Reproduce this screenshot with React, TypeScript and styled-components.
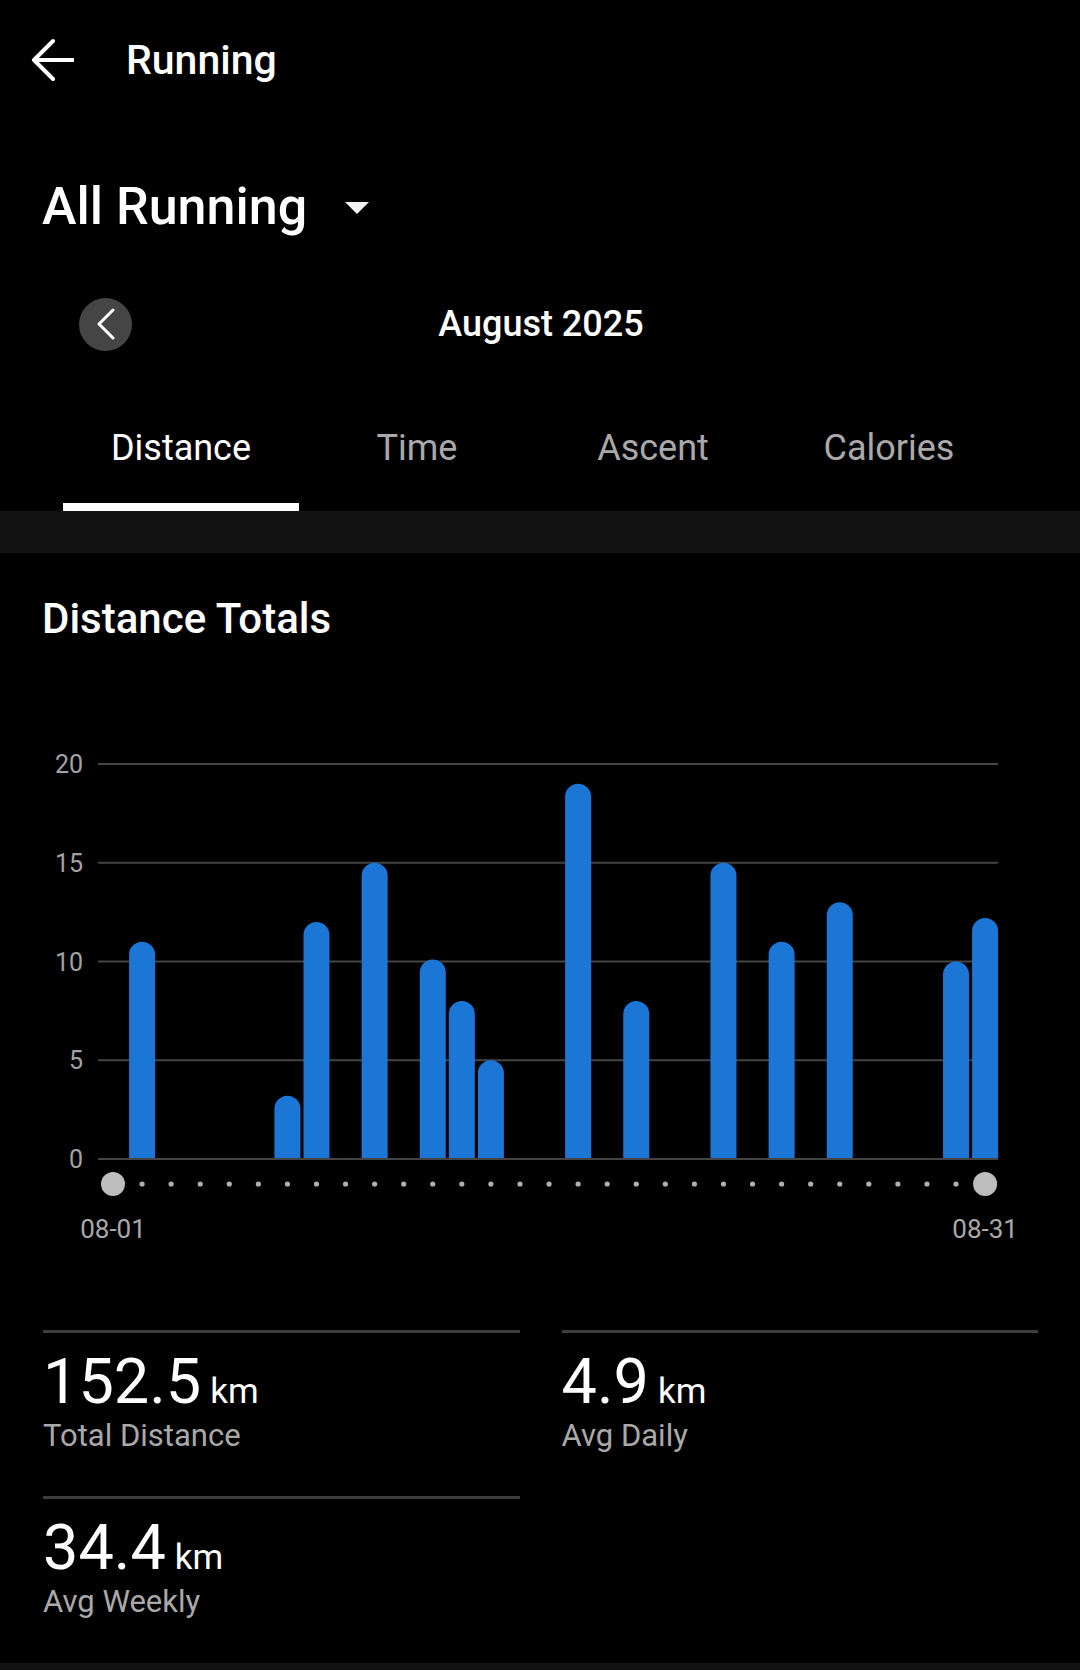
import React, { useState } from 'react';
import styled, { createGlobalStyle } from 'styled-components';

type Run = { day: number; km: number };

const RUNS: Run[] = [
  { day: 2, km: 11.0 },
  { day: 7, km: 3.2 },
  { day: 8, km: 12.0 },
  { day: 10, km: 15.0 },
  { day: 12, km: 10.1 },
  { day: 13, km: 8.0 },
  { day: 14, km: 5.0 },
  { day: 17, km: 19.0 },
  { day: 19, km: 8.0 },
  { day: 22, km: 15.0 },
  { day: 24, km: 11.0 },
  { day: 26, km: 13.0 },
  { day: 30, km: 10.0 },
  { day: 31, km: 12.2 },
];

const TABS = ['Distance', 'Time', 'Ascent', 'Calories'];

const STATS = [
  { value: '152.5', unit: 'km', label: 'Total Distance' },
  { value: '4.9', unit: 'km', label: 'Avg Daily' },
  { value: '34.4', unit: 'km', label: 'Avg Weekly' },
];

// chart geometry, in svg units (svg spans the page width)
const CHART_TOP = 698;
const ZERO_Y = 1158 - CHART_TOP;
const UNIT = 19.75;
const DAY0_X = 113;
const DAY_STEP = 29.07;
const BAR_W = 26;

const dayX = (day: number) => DAY0_X + (day - 1) * DAY_STEP;

const GlobalStyle = createGlobalStyle`
  html, body {
    margin: 0;
    padding: 0;
    background: #000;
  }
  body {
    font-family: Roboto, 'Noto Sans', 'Liberation Sans', sans-serif;
    color: #fff;
    -webkit-font-smoothing: antialiased;
  }
`;

const Screen = styled.div`
  width: 1080px;
  min-height: 1670px;
  background: #000;
  display: flex;
  flex-direction: column;
`;

const Header = styled.header`
  height: 120px;
  display: flex;
  align-items: center;
  padding-left: 30px;
`;

const IconButton = styled.button`
  display: flex;
  align-items: center;
  justify-content: center;
  padding: 0;
  border: none;
  background: none;
  cursor: pointer;
`;

const HeaderTitle = styled.h1`
  margin: 0 0 0 52px;
  font-size: 41px;
  font-weight: 500;
  line-height: 48px;
  color: #fff;
`;

const TypeRow = styled.div`
  margin-top: 46px;
  height: 81px;
  display: flex;
  align-items: center;
  padding-left: 42px;
`;

const TypeTitle = styled.h2`
  margin: 0;
  font-size: 52px;
  font-weight: 500;
  line-height: 64px;
  color: #fff;
`;

const Caret = styled.svg`
  margin-left: 38px;
  margin-top: 3px;
`;

const MonthRow = styled.div`
  margin-top: 47px;
  height: 60px;
  display: grid;
  grid-template-columns: 1fr auto 1fr;
  align-items: center;
`;

const PrevButton = styled.button`
  margin-left: 79px;
  width: 53px;
  height: 53px;
  border-radius: 50%;
  border: none;
  padding: 0;
  background: #454545;
  display: flex;
  align-items: center;
  justify-content: center;
  cursor: pointer;
`;

const MonthLabel = styled.div`
  font-size: 36px;
  font-weight: 500;
  line-height: 42px;
  color: #fff;
  padding-left: 2px;
`;

const TabList = styled.nav`
  margin-top: 30px;
  display: grid;
  grid-template-columns: repeat(4, 236px);
  padding-left: 63px;
`;

const Tab = styled.button<{ $active: boolean }>`
  height: 127px;
  box-sizing: border-box;
  padding: 8px 0 0;
  border: none;
  border-bottom: 8px solid ${({ $active }) => ($active ? '#fff' : 'transparent')};
  background: none;
  font-family: inherit;
  font-size: 36px;
  font-weight: 400;
  color: ${({ $active }) => ($active ? '#fff' : '#a9a9a9')};
  cursor: pointer;
`;

const Band = styled.div<{ $height: number }>`
  height: ${({ $height }) => $height}px;
  background: #121212;
`;

const SectionTitle = styled.h3`
  margin: 42px 0 0 42px;
  font-size: 42px;
  font-weight: 500;
  line-height: 48px;
  color: #fff;
`;

const ChartSvg = styled.svg`
  display: block;
  margin-top: 56px;
  font-family: Roboto, 'Noto Sans', sans-serif;
`;

const StatsGrid = styled.div`
  margin-top: 71px;
  display: grid;
  grid-template-columns: 1fr 1fr;
  column-gap: 42px;
  row-gap: 42px;
  padding: 0 42px 0 43px;
`;

const StatCell = styled.div`
  border-top: 3px solid #3c3c3c;
  padding-top: 17px;
`;

const StatValue = styled.div`
  display: flex;
  align-items: baseline;
  height: 63px;
  font-size: 63px;
  font-weight: 400;
  line-height: 63px;
  color: #fff;
  white-space: nowrap;
`;

const StatUnit = styled.span`
  font-size: 35px;
  line-height: 35px;
  margin-left: 9px;
`;

const StatLabel = styled.div`
  margin-top: 5px;
  font-size: 31px;
  line-height: 36px;
  color: #a9a9a9;
`;

const BackArrow = () => (
  <svg width="44" height="44" viewBox="0 0 44 44">
    <path
      d="M43 22H5M23 3L4 22l19 19"
      fill="none"
      stroke="#fff"
      strokeWidth="4"
      strokeLinecap="round"
      strokeLinejoin="round"
    />
  </svg>
);

const Chevron = () => (
  <svg width="20" height="32" viewBox="0 0 20 32">
    <path
      d="M17 2L3 16l14 14"
      fill="none"
      stroke="#fff"
      strokeWidth="3"
      strokeLinecap="round"
      strokeLinejoin="round"
    />
  </svg>
);

const barPath = (x: number, top: number, bottom: number) => {
  const r = BAR_W / 2;
  const left = x - r;
  const right = x + r;
  if (bottom - top < r) {
    return `M${left} ${bottom}V${top}H${right}V${bottom}Z`;
  }
  return `M${left} ${bottom}V${top + r}A${r} ${r} 0 0 1 ${right} ${top + r}V${bottom}Z`;
};

const DistanceChart = () => {
  const ticks = [0, 5, 10, 15, 20];
  const days = Array.from({ length: 31 }, (_, i) => i + 1);
  const dotY = 1183 - CHART_TOP;

  return (
    <ChartSvg width="1080" height="560" viewBox="0 0 1080 560">
      {ticks.map((t) => {
        const y = ZERO_Y - t * UNIT;
        return (
          <g key={t}>
            <line x1="98" x2="998" y1={y} y2={y} stroke="#444" strokeWidth="2" />
            <text
              x="83"
              y={y + 9}
              textAnchor="end"
              fontSize="25"
              fill="#a3a3a3"
            >
              {t}
            </text>
          </g>
        );
      })}
      {RUNS.map(({ day, km }) => (
        <path
          key={day}
          d={barPath(dayX(day), ZERO_Y - km * UNIT, ZERO_Y - 1)}
          fill="#1c76d6"
        />
      ))}
      {days.map((d) =>
        d === 1 || d === 31 ? (
          <circle key={d} cx={dayX(d)} cy={dotY} r="12" fill="#bdbdbd" />
        ) : (
          <circle key={d} cx={dayX(d)} cy={dotY} r="2.6" fill="#b0b0b0" />
        )
      )}
      <text x={dayX(1)} y={1237 - CHART_TOP} textAnchor="middle" fontSize="26" fill="#a9a9a9">
        08-01
      </text>
      <text x={dayX(31)} y={1237 - CHART_TOP} textAnchor="middle" fontSize="26" fill="#a9a9a9">
        08-31
      </text>
    </ChartSvg>
  );
};

const App = () => {
  const [activeTab, setActiveTab] = useState<string>(TABS[0]);

  return (
    <Screen>
      <GlobalStyle />
      <Header>
        <IconButton aria-label="Back">
          <BackArrow />
        </IconButton>
        <HeaderTitle>Running</HeaderTitle>
      </Header>

      <TypeRow>
        <TypeTitle>All Running</TypeTitle>
        <Caret width="24" height="12" viewBox="0 0 24 12">
          <path d="M0 0h24L12 12z" fill="#f2f2f2" />
        </Caret>
      </TypeRow>

      <MonthRow>
        <div>
          <PrevButton aria-label="Previous month">
            <Chevron />
          </PrevButton>
        </div>
        <MonthLabel>August 2025</MonthLabel>
        <div />
      </MonthRow>

      <TabList>
        {TABS.map((tab) => (
          <Tab key={tab} $active={activeTab === tab} onClick={() => setActiveTab(tab)}>
            {tab}
          </Tab>
        ))}
      </TabList>

      <Band $height={42} />

      <SectionTitle>Distance Totals</SectionTitle>

      <DistanceChart />

      <StatsGrid>
        {STATS.map(({ value, unit, label }) => (
          <StatCell key={label}>
            <StatValue>
              {value}
              <StatUnit>{unit}</StatUnit>
            </StatValue>
            <StatLabel>{label}</StatLabel>
          </StatCell>
        ))}
      </StatsGrid>

      <Band $height={8} style={{ marginTop: 43 }} />
    </Screen>
  );
};

export default App;
